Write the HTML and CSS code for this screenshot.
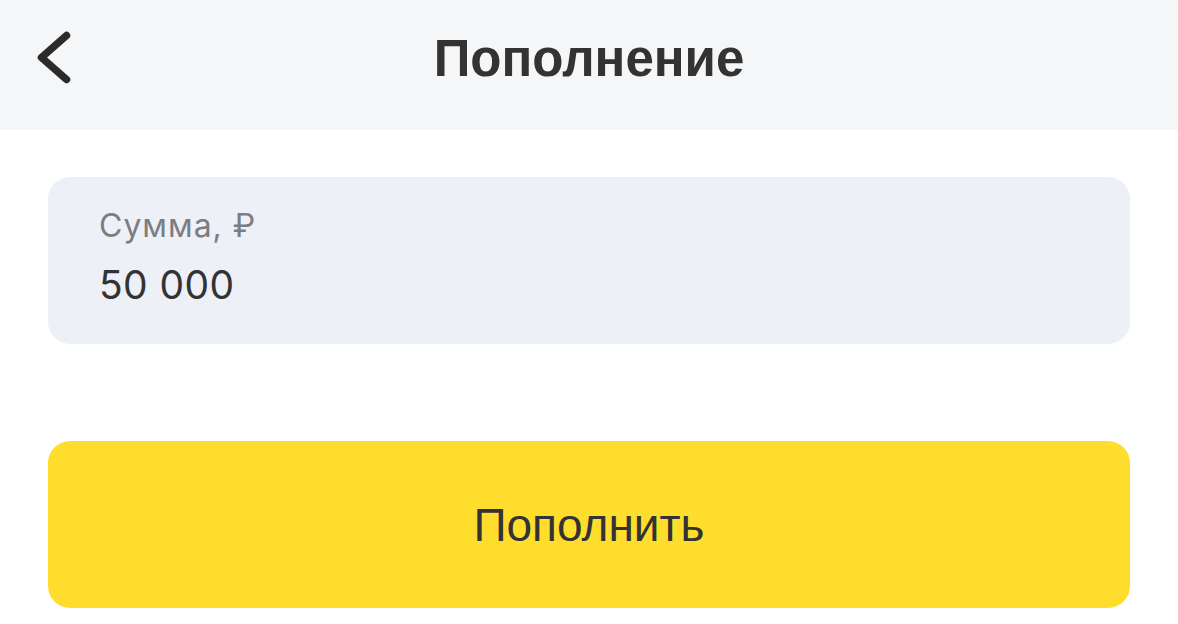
FILE: index.html
```html
<!DOCTYPE html>
<html lang="ru">
<head>
<meta charset="utf-8">
<title>Пополнение</title>
<link rel="stylesheet" href="styles.css">
</head>
<body>
<header class="topbar">
  <button class="back" aria-label="Назад">
    <svg width="60" height="80" viewBox="0 0 60 80" aria-hidden="true">
      <path d="M36.5 10.5 L11.5 32.5 L36.5 54.5" fill="none" stroke="#2b2b2b" stroke-width="7.5" stroke-linecap="round" stroke-linejoin="round"/>
    </svg>
  </button>
  <h1 class="title">Пополнение</h1>
  <span class="spacer"></span>
</header>
<main class="content">
  <div class="field">
    <span class="field-label">Сумма, ₽</span>
    <span class="field-value">50 000</span>
  </div>
  <button class="primary">Пополнить</button>
</main>
</body>
</html>
```

FILE: styles.css
```css
* { box-sizing: border-box; }
html, body { margin: 0; padding: 0; background: #ffffff; }
body { font-family: "Liberation Sans", Arial, sans-serif; color: #333333; }

.topbar {
  height: 130px;
  background: #f5f6f8;
  display: grid;
  grid-template-columns: 1fr auto 1fr;
  align-items: start;
  padding: 0 30px;
}
.back {
  justify-self: start;
  background: none;
  border: 0;
  padding: 0;
  width: 60px;
  height: 80px;
  display: flex;
  margin-top: 25px;
}
.title {
  margin: 0;
  font-size: 51px;
  font-weight: 700;
  color: #333333;
  line-height: 60px;
  padding-top: 29px;
}

.content {
  padding: 47px 48px 0;
  display: flex;
  flex-direction: column;
  gap: 97px;
}
.field {
  height: 167px;
  background: #edf0f7;
  border-radius: 22px;
  padding: 30px 51px 0;
  display: flex;
  flex-direction: column;
  gap: 17px;
  font-family: Inter, "Liberation Sans", sans-serif;
}
.field-label {
  font-size: 32px;
  line-height: 38px;
  color: #7b7d82;
  letter-spacing: 1px;
}
.field-value {
  font-size: 39px;
  line-height: 46px;
  color: #333333;
  letter-spacing: 0.4px;
}
.primary {
  height: 167px;
  background: #ffdd2d;
  border: 0;
  border-radius: 22px;
  font-family: "Liberation Sans", Arial, sans-serif;
  font-size: 46px;
  color: #333333;
  padding: 0;
}
```
